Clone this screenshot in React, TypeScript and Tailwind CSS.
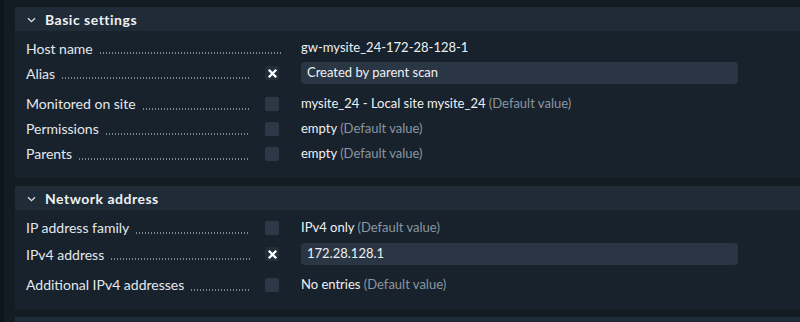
import { ReactNode } from "react";

type Row = {
  label: string;
  checkbox?: "on" | "off";
  value?: ReactNode;
  input?: string;
  h: string;
};

const Def = () => <span className="text-[#8b96a1]"> (Default value)</span>;

const basicRows: Row[] = [
  { label: "Host name", value: "gw-mysite_24-172-28-128-1", h: "h-[22px]" },
  { label: "Alias", checkbox: "on", input: "Created by parent scan", h: "h-[28px] mb-1" },
  {
    label: "Monitored on site",
    checkbox: "off",
    value: (
      <>
        mysite_24 - Local site mysite_24
        <Def />
      </>
    ),
    h: "h-[25px]",
  },
  { label: "Permissions", checkbox: "off", value: (<>empty<Def /></>), h: "h-[25px]" },
  { label: "Parents", checkbox: "off", value: (<>empty<Def /></>), h: "h-[25px]" },
];

const networkRows: Row[] = [
  { label: "IP address family", checkbox: "off", value: (<>IPv4 only<Def /></>), h: "h-[25px]" },
  { label: "IPv4 address", checkbox: "on", input: "172.28.128.1", h: "h-[28px] mb-1" },
  { label: "Additional IPv4 addresses", checkbox: "off", value: (<>No entries<Def /></>), h: "h-[25px]" },
];

const Chevron = () => (
  <svg width="9" height="6" viewBox="0 0 9 6" className="mr-[9px] mt-[2px]">
    <path d="M1 1.2 L4.5 4.6 L8 1.2" fill="none" stroke="#dfe4e8" strokeWidth="1.3" />
  </svg>
);

const FormRow = ({ row }: { row: Row }) => {
  return (
    <div className={`flex items-center ${row.h}`}>
      <div className={`flex items-center text-[14px] ${row.checkbox ? "w-[224px]" : "w-[256px]"}`}>
        <span className="whitespace-nowrap">{row.label}</span>
        <span className="ml-[6px] mt-[10px] h-[2px] flex-1 bg-[radial-gradient(circle,#7d8893_0.6px,transparent_1px)] bg-[length:3px_2px]" />
      </div>
      {row.checkbox ? (
        <div className="w-[51px] pl-[15px]">
          {row.checkbox === "on" ? (
            <div className="flex h-[14px] w-[14px] items-center justify-center rounded-[2px] bg-[#222e3a]">
              <svg width="11" height="11" viewBox="0 0 11 11">
                <path d="M1.8 1.8 L9.2 9.2 M9.2 1.8 L1.8 9.2" stroke="#ffffff" strokeWidth="2.3" />
              </svg>
            </div>
          ) : (
            <div className="h-[14px] w-[14px] rounded-[2px] bg-[#2c3845]" />
          )}
        </div>
      ) : (
        <div className="w-[19px]" />
      )}
      {row.input ? (
        <div className="flex h-[22px] w-[437px] items-center rounded-[4px] bg-[#2a3644] pl-[6px] text-[#eef1f3]">
          {row.input}
        </div>
      ) : (
        <div className="whitespace-nowrap text-[#eef1f3]">{row.value}</div>
      )}
    </div>
  );
};

const Section = ({ title, rows, pt }: { title: string; rows: Row[]; pt: string }) => (
  <div>
    <div className="flex h-[24px] items-center bg-[#1f2b36] pl-[12px] text-[14px] font-bold tracking-[0.5px] text-[#eef1f3]">
      <Chevron />
      {title}
    </div>
    <div className={`bg-[#17222c] pl-[11px] pb-[12px] ${pt}`}>
      {rows.map((r) => (
        <FormRow key={r.label} row={r} />
      ))}
    </div>
  </div>
);

export default function App() {
  return (
    <div
      className="flex h-[322px] w-[800px] overflow-hidden bg-[#131b23] text-[13px] text-[#e4e8ec]"
      style={{ fontFamily: "Lato, 'Noto Sans', sans-serif" }}
    >
      <div className="w-[4px] shrink-0 bg-[#0e151c]" />
      <div className="flex flex-1 flex-col gap-[8px] pl-[11px] pt-[7px]">
        <Section title="Basic settings" rows={basicRows} pt="pt-[6px]" />
        <Section title="Network address" rows={networkRows} pt="pt-[5px]" />
        <div className="h-[24px] bg-[#1f2b36]" />
      </div>
    </div>
  );
}
